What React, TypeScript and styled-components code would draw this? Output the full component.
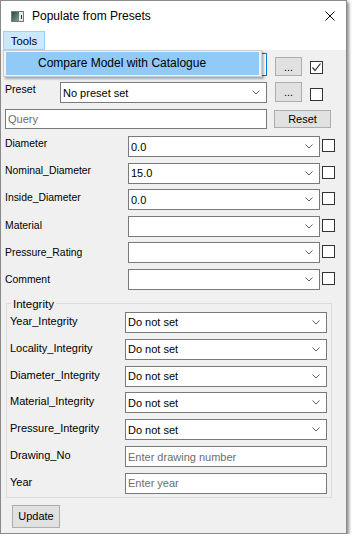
import React from 'react';
import styled, { createGlobalStyle } from 'styled-components';

const Global = createGlobalStyle`
  html, body { margin: 0; padding: 0; background: #ffffff; }
  body { font-family: "Liberation Sans", Arial, sans-serif; color: #000; }
  * { box-sizing: border-box; }
`;

const Window = styled.div`
  position: relative;
  width: 347px;
  height: 534px;
  border: 1px solid #8a8a8a;
  background: #f0f0f0;
  box-shadow: 2px 2px 3px rgba(0, 0, 0, 0.45);
  display: flex;
  flex-direction: column;
`;

const TitleBar = styled.div`
  height: 30px;
  flex: none;
  background: #ffffff;
  display: flex;
  align-items: center;
  padding: 0 11px 0 10px;
`;

const Title = styled.span`
  margin-left: 8px;
  font-size: 12px;
  color: #000;
`;

const CloseBtn = styled.span`
  margin-left: auto;
  display: flex;
`;

const MenuBar = styled.div`
  height: 19px;
  flex: none;
  background: #ffffff;
  display: flex;
  padding-left: 2px;
`;

const MenuItem = styled.div<{ $active?: boolean }>`
  height: 19px;
  width: 42px;
  display: flex;
  align-items: center;
  justify-content: center;
  font-size: 11.3px;
  border: 1px solid ${p => (p.$active ? '#99d1ff' : 'transparent')};
  background: ${p => (p.$active ? '#cce8ff' : 'transparent')};
`;

const Content = styled.div`
  flex: 1;
  display: flex;
  flex-direction: column;
  padding: 3px 0 0 4px;
`;

const Row = styled.div<{ $mt?: number }>`
  display: flex;
  align-items: flex-start;
  margin-top: ${p => p.$mt ?? 0}px;
`;

const Label = styled.div<{ $w: number; $size?: number; $pt?: number }>`
  width: ${p => p.$w}px;
  flex: none;
  font-size: ${p => p.$size ?? 10.4}px;
  line-height: 13px;
  padding-top: ${p => p.$pt ?? 1}px;
  white-space: nowrap;
`;

const Combo = styled.div<{ $w: number; $h?: number; $focus?: boolean }>`
  width: ${p => p.$w}px;
  height: ${p => p.$h ?? 21}px;
  flex: none;
  border: 1px solid ${p => (p.$focus ? '#0078d7' : '#7a7a7a')};
  background: #ffffff;
  display: flex;
  align-items: center;
  padding: 0 6px 0 2px;
  font-size: 11px;
`;

const ComboText = styled.span`
  flex: 1;
  white-space: nowrap;
  overflow: hidden;
`;

const TextInput = styled.input<{ $w: number; $h?: number }>`
  width: ${p => p.$w}px;
  height: ${p => p.$h ?? 21}px;
  flex: none;
  border: 1px solid #7a7a7a;
  background: #ffffff;
  padding: 0 0 0 2px;
  margin: 0;
  font-family: "Liberation Sans", Arial, sans-serif;
  font-size: 11px;
  outline: none;
  &::placeholder { color: #6d6d6d; opacity: 1; }
`;

const Button = styled.button<{ $w: number; $h: number; $ml?: number; $mt?: number }>`
  width: ${p => p.$w}px;
  height: ${p => p.$h}px;
  flex: none;
  margin: ${p => p.$mt ?? 0}px 0 0 ${p => p.$ml ?? 0}px;
  padding: 0;
  border: 1px solid #adadad;
  background: #e1e1e1;
  font-family: "Liberation Sans", Arial, sans-serif;
  font-size: 11px;
  color: #000;
  display: flex;
  align-items: center;
  justify-content: center;
`;

const Check = styled.span<{ $ml?: number; $mt?: number }>`
  width: 13px;
  height: 13px;
  flex: none;
  margin: ${p => p.$mt ?? 0}px 0 0 ${p => p.$ml ?? 0}px;
  border: 1px solid #333333;
  background: #ffffff;
  display: flex;
`;

const Fields = styled.div`
  display: flex;
  flex-direction: column;
  gap: 5.6px;
  margin-top: 7px;
`;

const Group = styled.fieldset`
  margin: 7px 0 0 1px;
  width: 326px;
  padding: 1px 4px 3px 3px;
  border: 1px solid #dcdcdc;
  display: flex;
  flex-direction: column;
  gap: 5.83px;
  min-width: 0;
`;

const Legend = styled.legend`
  margin-left: 1px;
  padding: 0 2px;
  font-size: 11.5px;
  line-height: 14px;
`;

const Menu = styled.div`
  position: absolute;
  left: 2px;
  top: 49px;
  width: 259px;
  height: 27px;
  padding: 1px 2px;
  border: 1px solid #cccccc;
  background: #f2f2f2;
  box-shadow: 2px 2px 2px rgba(0, 0, 0, 0.3);
`;

const MenuEntry = styled.div<{ $hot?: boolean }>`
  height: 23px;
  line-height: 23px;
  padding-left: 32px;
  font-size: 12px;
  background: ${p => (p.$hot ? '#91c9f7' : 'transparent')};
  white-space: nowrap;
`;

const Chevron = () => (
  <svg width="8" height="5" viewBox="0 0 8 5" style={{ flex: 'none' }}>
    <polyline points="0.5,0.5 4,4 7.5,0.5" fill="none" stroke="#606060" strokeWidth="1" />
  </svg>
);

const CheckMark = () => (
  <svg width="11" height="11" viewBox="0 0 11 11">
    <polyline points="1.5,5.5 4,8.5 9.5,1.5" fill="none" stroke="#333" strokeWidth="1.2" />
  </svg>
);

const AppIcon = () => (
  <svg width="13" height="11" viewBox="0 0 13 11">
    <defs>
      <linearGradient id="ig" x1="0" y1="0" x2="1" y2="1">
        <stop offset="0" stopColor="#2e4a4a" />
        <stop offset="1" stopColor="#7f9c9c" />
      </linearGradient>
    </defs>
    <rect x="0.5" y="0.5" width="12" height="10" fill="#e8e8e8" stroke="#777" />
    <rect x="1" y="1" width="7" height="9" fill="url(#ig)" />
    <rect x="10" y="4" width="1" height="4" fill="#333" />
  </svg>
);

const CloseIcon = () => (
  <svg width="10" height="10" viewBox="0 0 10 10">
    <path d="M0.5 0.5 L9.5 9.5 M9.5 0.5 L0.5 9.5" stroke="#000" strokeWidth="1" fill="none" />
  </svg>
);

const upper: [string, string][] = [
  ['Diameter', '0.0'],
  ['Nominal_Diameter', '15.0'],
  ['Inside_Diameter', '0.0'],
  ['Material', ''],
  ['Pressure_Rating', ''],
  ['Comment', ''],
];

const integrity = [
  'Year_Integrity',
  'Locality_Integrity',
  'Diameter_Integrity',
  'Material_Integrity',
  'Pressure_Integrity',
];

export default function App() {
  return (
    <>
      <Global />
      <Window>
        <TitleBar>
          <AppIcon />
          <Title>Populate from Presets</Title>
          <CloseBtn>
            <CloseIcon />
          </CloseBtn>
        </TitleBar>
        <MenuBar>
          <MenuItem $active>Tools</MenuItem>
        </MenuBar>
        <Content>
          <Row>
            <Label $w={55} />
            <Combo $w={207} $h={23} $focus>
              <ComboText />
              <Chevron />
            </Combo>
            <Button $w={27} $h={19} $ml={8} $mt={4}>...</Button>
            <Check $ml={8} $mt={8}>
              <CheckMark />
            </Check>
          </Row>
          <Row $mt={6}>
            <Label $w={55} $size={10.6}>Preset</Label>
            <Combo $w={207}>
              <ComboText>No preset set</ComboText>
              <Chevron />
            </Combo>
            <Button $w={27} $h={20} $ml={8}>...</Button>
            <Check $ml={8} $mt={6} />
          </Row>
          <Row $mt={6}>
            <TextInput $w={262} $h={20} placeholder="Query" />
            <Button $w={57} $h={18} $ml={7} $mt={1}>Reset</Button>
          </Row>
          <Fields>
            {upper.map(([name, value], i) => (
              <Row key={name}>
                <Label $w={123} $pt={1 + i * 0.6}>{name}</Label>
                <Combo $w={192}>
                  <ComboText>{value}</ComboText>
                  <Chevron />
                </Combo>
                <Check $ml={2} $mt={3} />
              </Row>
            ))}
          </Fields>
          <Group>
            <Legend>Integrity</Legend>
            {integrity.map(name => (
              <Row key={name}>
                <Label $w={115} $size={11} $pt={3}>{name}</Label>
                <Combo $w={202}>
                  <ComboText>Do not set</ComboText>
                  <Chevron />
                </Combo>
              </Row>
            ))}
            <Row>
              <Label $w={115} $size={11} $pt={3}>Drawing_No</Label>
              <TextInput $w={202} placeholder="Enter drawing number" />
            </Row>
            <Row>
              <Label $w={115} $size={11} $pt={3}>Year</Label>
              <TextInput $w={202} placeholder="Enter year" />
            </Row>
          </Group>
          <Row $mt={7}>
            <Button $w={48} $h={23} $ml={7}>Update</Button>
          </Row>
        </Content>
        <Menu>
          <MenuEntry $hot>Compare Model with Catalogue</MenuEntry>
        </Menu>
      </Window>
    </>
  );
}
